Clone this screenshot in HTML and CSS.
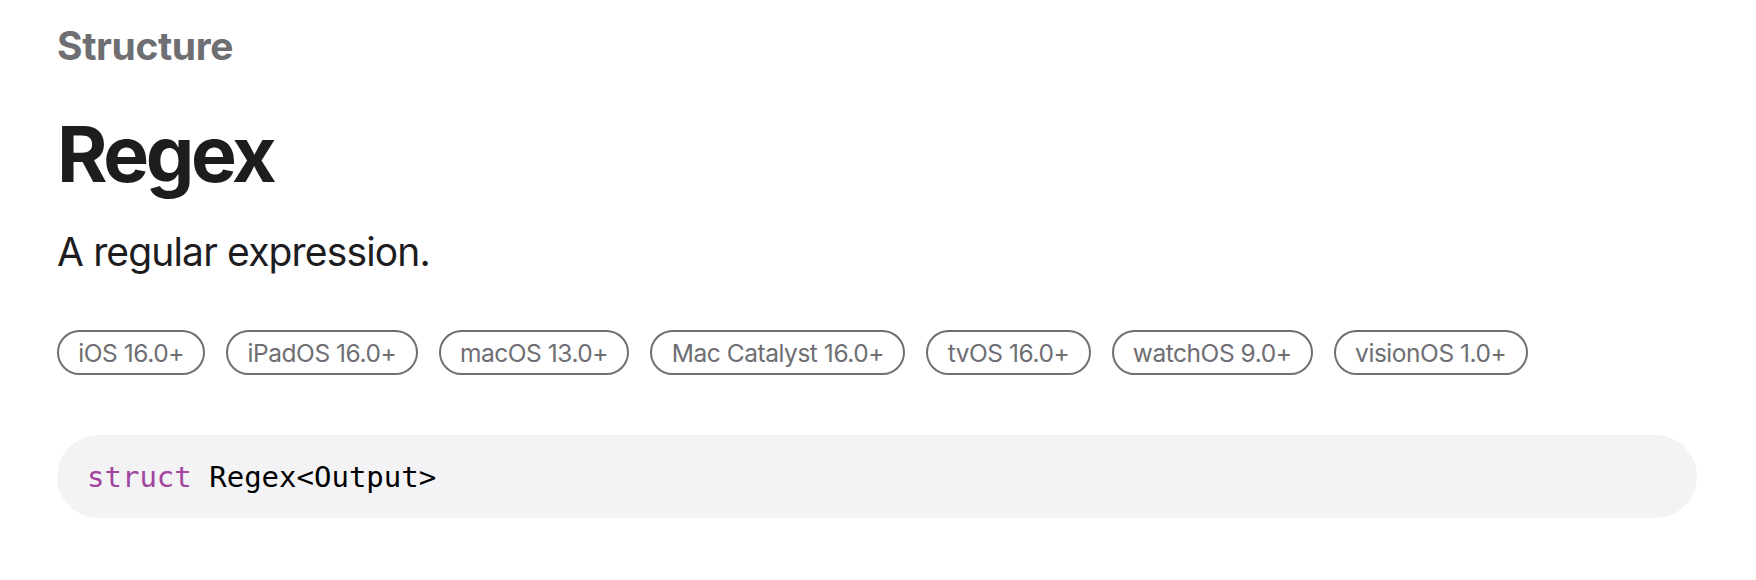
FILE: index.html
```html
<!DOCTYPE html>
<html lang="en">
<head>
<meta charset="utf-8">
<title>Regex | Apple Developer Documentation</title>
<link rel="stylesheet" href="styles.css">
</head>
<body>
<main class="topic">
  <div class="eyebrow">Structure</div>
  <h1 class="title">Regex</h1>
  <p class="abstract">A regular expression.</p>
  <ul class="platforms">
    <li class="pill">iOS 16.0+</li>
    <li class="pill">iPadOS 16.0+</li>
    <li class="pill">macOS 13.0+</li>
    <li class="pill">Mac Catalyst 16.0+</li>
    <li class="pill">tvOS 16.0+</li>
    <li class="pill">watchOS 9.0+</li>
    <li class="pill">visionOS 1.0+</li>
  </ul>
  <pre class="declaration"><code><span class="kw">struct</span> Regex&lt;Output&gt;</code></pre>
</main>
</body>
</html>
```

FILE: styles.css
```css
html, body {
  margin: 0;
  padding: 0;
  background: #ffffff;
}

body {
  font-family: "Inter", "Noto Sans", "Liberation Sans", sans-serif;
  color: #1d1d1f;
}

.topic {
  padding: 22px 59px 0 57px;
}

.eyebrow {
  font-size: 39px;
  line-height: 47px;
  font-weight: 700;
  color: #6e6e73;
  letter-spacing: -0.4px;
}

.title {
  margin: 42px 0 0;
  font-size: 77px;
  line-height: 86px;
  font-weight: 700;
  color: #1d1d1f;
  letter-spacing: -3.4px;
}

.abstract {
  margin: 31px 0 0;
  font-size: 39px;
  line-height: 47px;
  font-weight: 400;
  color: #1d1d1f;
  letter-spacing: -0.85px;
}

.platforms {
  list-style: none;
  margin: 55px 0 0;
  padding: 0;
  display: flex;
  flex-wrap: wrap;
  gap: 21px;
}

.pill {
  border: 2px solid #707073;
  border-radius: 999px;
  padding: 6px 19.3px 5px;
  font-size: 24.5px;
  line-height: 30px;
  color: #6e6e73;
  letter-spacing: -0.45px;
  white-space: nowrap;
}

.declaration {
  margin: 60px 0 0;
  background: #f3f3f5;
  border-radius: 42px;
  padding: 24px 30px 23px;
  font-family: "DejaVu Sans Mono", "Liberation Mono", monospace;
  font-size: 29px;
  line-height: 36px;
  color: #000000;
}

.declaration .kw {
  color: #a1459f;
}
```
